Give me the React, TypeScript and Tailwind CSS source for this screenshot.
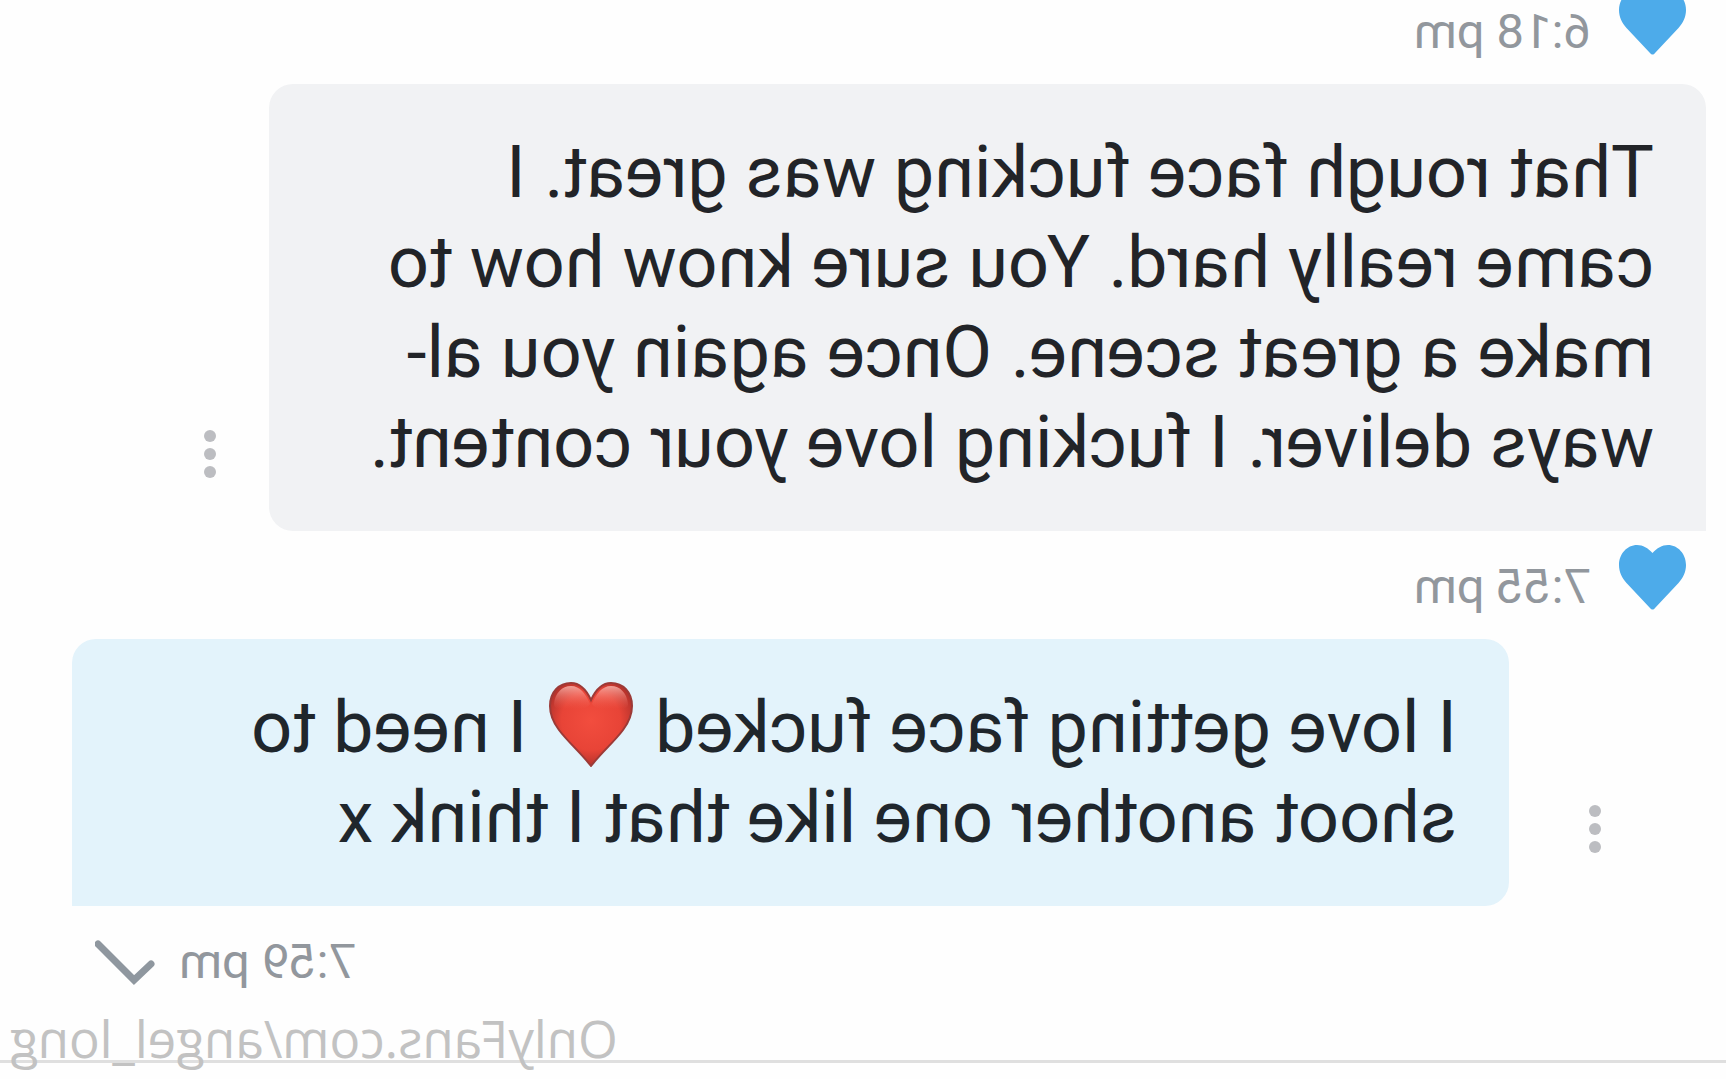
import clsx from 'clsx'

type Message = {
  id: number
  lines: React.ReactNode[]
  own?: boolean
}

function BlueHeart() {
  return (
    <svg viewBox="0 0 67 65" className="w-[67px] h-[65px] shrink-0" aria-hidden="true">
      <path
        fill="#4dabea"
        d="M33.5 8C29 3 24 0 18 0C8 0 0 9 0 20C0 27 3 33 7.500 38L31 63C32.500 65 34.500 65 36 63L59.500 38C64 33 67 27 67 20C67 9 59 0 49 0C43 0 38 3 33.500 8Z"
      />
    </svg>
  )
}

function RedHeart() {
  return (
    <svg
      viewBox="0 0 84 85"
      className="inline-block w-[84px] h-[85px] -mt-7 -mb-3 mx-1 align-middle"
      role="img"
      aria-label="red heart"
    >
      <defs>
        <radialGradient id="heart-body" cx="0.5" cy="0.45" r="0.6">
          <stop offset="0" stopColor="#f24d3e" />
          <stop offset="0.6" stopColor="#e84437" />
          <stop offset="1" stopColor="#a82e29" />
        </radialGradient>
        <linearGradient id="heart-shine" x1="0" y1="0" x2="0" y2="1">
          <stop offset="0" stopColor="#ffc4bc" stopOpacity="0.75" />
          <stop offset="1" stopColor="#f4685a" stopOpacity="0" />
        </linearGradient>
      </defs>
      <path
        fill="url(#heart-body)"
        stroke="#9c3a37"
        strokeWidth="2"
        d="M42 18C37 7 31 1 22 1C10 1 1 10 1 24C1 33 4 40 10 48C19 60 31 70 42 84C53 70 65 60 74 48C80 40 83 33 83 24C83 10 74 1 62 1C53 1 47 7 42 18Z"
      />
      <path
        fill="url(#heart-shine)"
        d="M22 4C31 4 37 12 41 22C37 28 30 27 21 27C12 27 5 28 5 22C6 11 13 4 22 4Z"
      />
      <path
        fill="url(#heart-shine)"
        d="M62 4C53 4 47 12 43 22C47 28 54 27 63 27C72 27 79 28 79 22C78 11 71 4 62 4Z"
      />
    </svg>
  )
}

function MoreButton() {
  return (
    <button type="button" aria-label="Message options" className="flex flex-col gap-1.5 shrink-0 mb-[53px]">
      {[0, 1, 2].map((i) => (
        <span key={i} className="size-3 rounded-full bg-[#bcbdc1]" />
      ))}
    </button>
  )
}

function Bubble({ message }: { message: Message }) {
  return (
    <div
      className={clsx(
        'flex items-end',
        message.own ? 'flex-row-reverse gap-20 pl-[125px] pr-[72px]' : 'gap-[53px] pl-5 pr-[204px]'
      )}
    >
      <p
        className={clsx(
          'flex-1 min-w-0 px-[52px] pt-11 pb-[43px] text-[72px] leading-[90px] whitespace-nowrap rounded-t-3xl',
          message.own ? 'rounded-bl-3xl bg-[#e3f3fb] text-[#1f262c]' : 'rounded-br-3xl bg-[#f1f2f4] text-[#222428]'
        )}
      >
        {message.lines.map((line, i) => (
          <span key={i} className="block">
            {line}
          </span>
        ))}
      </p>
      <MoreButton />
    </div>
  )
}

function LikedTime({ time }: { time: string }) {
  return (
    <div className="flex h-[108px] pl-10 pt-3.5 gap-7">
      <BlueHeart />
      <time className="mt-3.5 text-[49px] leading-14 text-[#92979d]">{time}</time>
    </div>
  )
}

function SentTime({ time }: { time: string }) {
  return (
    <div className="flex justify-end h-[108px] pr-[95px] pt-7 gap-6">
      <time className="text-[49px] leading-14 text-[#92979d]">{time}</time>
      <svg viewBox="0 0 60 46" className="w-[60px] h-[46px] mt-1.5" role="img" aria-label="Sent">
        <path
          d="M4 24L21 40L57 4"
          fill="none"
          stroke="#8f979f"
          strokeWidth="7"
          strokeLinecap="round"
        />
      </svg>
    </div>
  )
}

const received: Message = {
  id: 1,
  lines: [
    'That rough face fucking was great. I',
    'came really hard. You sure know how to',
    'make a great scene. Once again you al-',
    'ways deliver. I fucking love your content.',
  ],
}

const sent: Message = {
  id: 2,
  own: true,
  lines: [
    <>
      I love getting face fucked <RedHeart /> I need to
    </>,
    'shoot another one like that I think x',
  ],
}

export default function App() {
  return (
    <div className="overflow-hidden bg-[#fefefe] font-[Roboto,sans-serif]">
      <main className="-mt-6 -scale-x-100">
        <LikedTime time="6:18 pm" />
        <Bubble message={received} />
        <LikedTime time="7:55 pm" />
        <Bubble message={sent} />
        <SentTime time="7:59 pm" />
        <footer className="relative flex justify-end h-[65px] pr-2.5">
          <hr className="absolute inset-x-0 top-[46px] border-0 h-[3px] bg-[#dfdfdf]" />
          <span className="relative text-[51px] leading-12 text-[#c2c2c2] font-['Open_Sans',sans-serif]">
            OnlyFans.com/angel_long
          </span>
        </footer>
      </main>
    </div>
  )
}
